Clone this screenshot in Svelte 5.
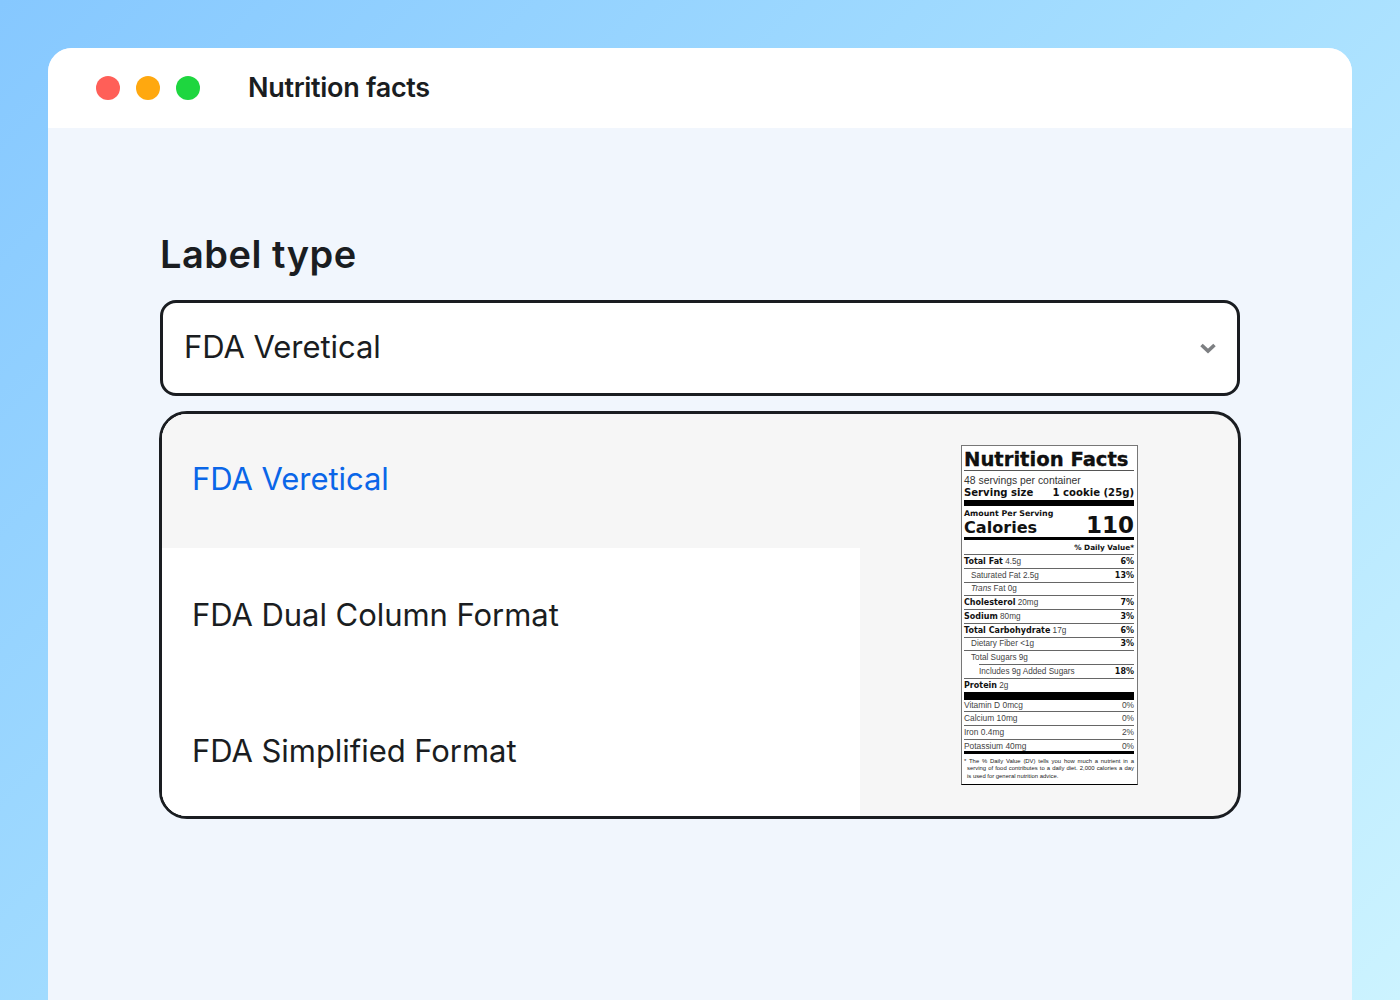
<script lang="ts">
  const options = ["FDA Veretical", "FDA Dual Column Format", "FDA Simplified Format"];
  let selected = $state(0);

  const nutrients = [
    { name: "Total Fat", amount: "4.5g", pct: "6%", strong: true },
    { name: "Saturated Fat", amount: "2.5g", pct: "13%", indent: 1 },
    { name: "Trans", rest: "Fat", amount: "0g", pct: "", indent: 1, italic: true },
    { name: "Cholesterol", amount: "20mg", pct: "7%", strong: true },
    { name: "Sodium", amount: "80mg", pct: "3%", strong: true },
    { name: "Total Carbohydrate", amount: "17g", pct: "6%", strong: true },
    { name: "Dietary Fiber", amount: "<1g", pct: "3%", indent: 1 },
    { name: "Total Sugars", amount: "9g", pct: "", indent: 1 },
    { name: "Includes 9g Added Sugars", amount: "", pct: "18%", indent: 2 },
    { name: "Protein", amount: "2g", pct: "", strong: true }
  ];

  const vitamins = [
    { name: "Vitamin D", amount: "0mcg", pct: "0%" },
    { name: "Calcium", amount: "10mg", pct: "0%" },
    { name: "Iron", amount: "0.4mg", pct: "2%" },
    { name: "Potassium", amount: "40mg", pct: "0%" }
  ];
</script>

<div class="page">
  <div class="window">
    <header class="titlebar">
      <div class="lights">
        <span class="light red"></span>
        <span class="light orange"></span>
        <span class="light green"></span>
      </div>
      <h1>Nutrition facts</h1>
    </header>

    <main class="content">
      <h2>Label type</h2>
      <button type="button" class="select">
        <span>{options[selected]}</span>
        <svg width="18" height="12" viewBox="0 0 18 12" aria-hidden="true">
          <path d="M2.5 3 L9 9 L15.5 3" fill="none" stroke="#7d7f82" stroke-width="3.6" />
        </svg>
      </button>

      <div class="panel">
        <ul class="options">
          {#each options as option, i}
            <li>
              <button type="button" class="option" class:active={i === selected} onclick={() => (selected = i)}>
                {option}
              </button>
            </li>
          {/each}
        </ul>

        <div class="preview">
          <div class="label">
            <div class="label-title">Nutrition Facts</div>
            <div class="servings">48 servings per container</div>
            <div class="serving-size"><span>Serving size</span><span>1 cookie (25g)</span></div>
            <div class="bar thick"></div>
            <div class="amount">Amount Per Serving</div>
            <div class="calories"><span>Calories</span><span class="cal-num">110</span></div>
            <div class="bar medium"></div>
            <div class="dv">% Daily Value*</div>

            {#each nutrients as n}
              <div class="row" class:indent1={n.indent === 1} class:indent2={n.indent === 2}>
                <span class="row-name">
                  {#if n.strong}<b>{n.name}</b>{:else if n.italic}<i>{n.name}</i> {n.rest}{:else}{n.name}{/if}
                  {n.amount}
                </span>
                <b>{n.pct}</b>
              </div>
            {/each}

            <div class="bar big"></div>

            {#each vitamins as v, i}
              <div class="row vitamin" class:first={i === 0}>
                <span class="row-name">{v.name} {v.amount}</span>
                <span>{v.pct}</span>
              </div>
            {/each}

            <div class="bar medium foot"></div>
            <p class="footnote">
              * The % Daily Value (DV) tells you how much a nutrient in a serving of food contributes to a daily diet. 2,000 calories a day is used for general nutrition advice.
            </p>
          </div>
        </div>
      </div>
    </main>
  </div>
</div>

<style>
  :global(body) {
    margin: 0;
    overflow: hidden;
  }

  .page {
    height: 1000px;
    box-sizing: border-box;
    padding: 48px 48px 0;
    background: linear-gradient(135deg, #86c8ff 0%, #a5deff 50%, #ccf3ff 100%);
    font-family: Inter, "Liberation Sans", sans-serif;
    color: #1a1d21;
  }

  .window {
    height: 952px;
    display: flex;
    flex-direction: column;
    border-radius: 24px 24px 0 0;
    overflow: hidden;
    background: #f1f6fd;
  }

  .titlebar {
    height: 80px;
    flex-shrink: 0;
    display: flex;
    align-items: center;
    gap: 48px;
    padding-left: 48px;
    background: #fff;
  }

  .lights {
    display: flex;
    gap: 16px;
  }

  .light {
    width: 24px;
    height: 24px;
    border-radius: 50%;
  }

  .red { background: #ff5f58; }
  .orange { background: #ffa80f; }
  .green { background: #1ed63f; }

  h1 {
    margin: 0 0 2px;
    font-size: 27px;
    font-weight: 600;
    letter-spacing: -0.3px;
  }

  .content {
    padding: 103px 112px 0;
  }

  h2 {
    margin: 0 0 23px;
    font-size: 38px;
    line-height: 46px;
    font-weight: 600;
    letter-spacing: 0.5px;
  }

  .select {
    width: 100%;
    height: 96px;
    box-sizing: border-box;
    display: flex;
    align-items: center;
    justify-content: space-between;
    padding: 0 20px 4px 21px;
    background: #fff;
    border: 3px solid #1a1d21;
    border-radius: 16px;
    font: inherit;
    font-size: 31px;
    letter-spacing: -0.05px;
    color: inherit;
    cursor: pointer;
  }

  .select svg {
    margin-top: 4px;
  }

  .panel {
    margin: 15px -1px 0;
    height: 408px;
    box-sizing: border-box;
    display: flex;
    border: 3px solid #1a1d21;
    border-radius: 28px;
    overflow: hidden;
    background: #f6f6f6;
  }

  .options {
    width: 698px;
    flex-shrink: 0;
    margin: 0;
    padding: 0;
    list-style: none;
    background: #fff;
  }

  .option {
    width: 100%;
    height: 134px;
    margin-bottom: 2px;
    display: block;
    padding: 0 0 2px 30px;
    border: none;
    background: #fff;
    font: inherit;
    font-size: 31px;
    letter-spacing: -0.05px;
    color: inherit;
    text-align: left;
    cursor: pointer;
  }

  .option.active {
    height: 134px;
    margin-bottom: 0;
    padding-bottom: 6px;
    background: #f6f6f6;
    color: #0a66e8;
  }

  .preview {
    flex: 1;
    padding: 31px 0 0 101px;
  }

  .label {
    width: 177px;
    height: 340px;
    box-sizing: border-box;
    padding: 0 3px 0 2px;
    background: #fff;
    border: 1px solid #777;
    border-bottom-color: #000;
    font-family: "Liberation Sans", Arial, sans-serif;
    color: #111;
    overflow: hidden;
  }

  .label-title {
    height: 24px;
    line-height: 27px;
    font-family: "DejaVu Sans", sans-serif;
    font-size: 19.6px;
    font-weight: 700;
    -webkit-text-stroke: 0.3px #000;
    white-space: nowrap;
    border-bottom: 1px solid #555;
  }

  .servings {
    height: 15px;
    line-height: 20px;
    font-size: 10.4px;
    color: #333;
    white-space: nowrap;
  }

  .serving-size {
    display: flex;
    justify-content: space-between;
    height: 13px;
    line-height: 13px;
    font-family: "DejaVu Sans", sans-serif;
    font-size: 10.1px;
    font-weight: 700;
    white-space: nowrap;
  }

  .bar {
    background: #000;
  }

  .thick {
    height: 6px;
    margin-top: 1px;
  }

  .medium {
    height: 3px;
  }

  .big {
    height: 8px;
  }

  .foot {
    margin-top: -1px;
  }

  .amount {
    height: 10px;
    line-height: 15px;
    font-family: "DejaVu Sans", sans-serif;
    font-size: 7.9px;
    font-weight: 700;
    white-space: nowrap;
  }

  .calories {
    display: flex;
    justify-content: space-between;
    align-items: flex-end;
    height: 21px;
    line-height: 18px;
    font-family: "DejaVu Sans", sans-serif;
    font-size: 16.1px;
    font-weight: 700;
  }

  .cal-num {
    font-size: 23px;
    line-height: 24px;
    margin-bottom: 0;
  }

  .dv {
    height: 14px;
    line-height: 16px;
    font-family: "DejaVu Sans", sans-serif;
    font-size: 7.3px;
    font-weight: 700;
    text-align: right;
  }

  .row {
    height: 13.75px;
    box-sizing: border-box;
    display: flex;
    justify-content: space-between;
    align-items: center;
    border-top: 1px solid #666;
    font-size: 8.2px;
    white-space: nowrap;
  }

  .row b {
    font-family: "DejaVu Sans", sans-serif;
    font-size: 8px;
  }

  .row-name {
    color: #444;
  }

  .row-name b {
    color: #111;
  }

  .indent1 .row-name {
    padding-left: 7px;
  }

  .indent2 {
    margin-left: 15px;
  }

  .vitamin.first {
    height: 11.5px;
    border-top: none;
  }

  .vitamin {
    color: #444;
    font-size: 8.4px;
  }

  .footnote {
    margin: 4px 0 0;
    padding-left: 3px;
    text-indent: -3px;
    font-size: 5.9px;
    line-height: 7.2px;
    text-align: justify;
    color: #222;
  }
</style>
